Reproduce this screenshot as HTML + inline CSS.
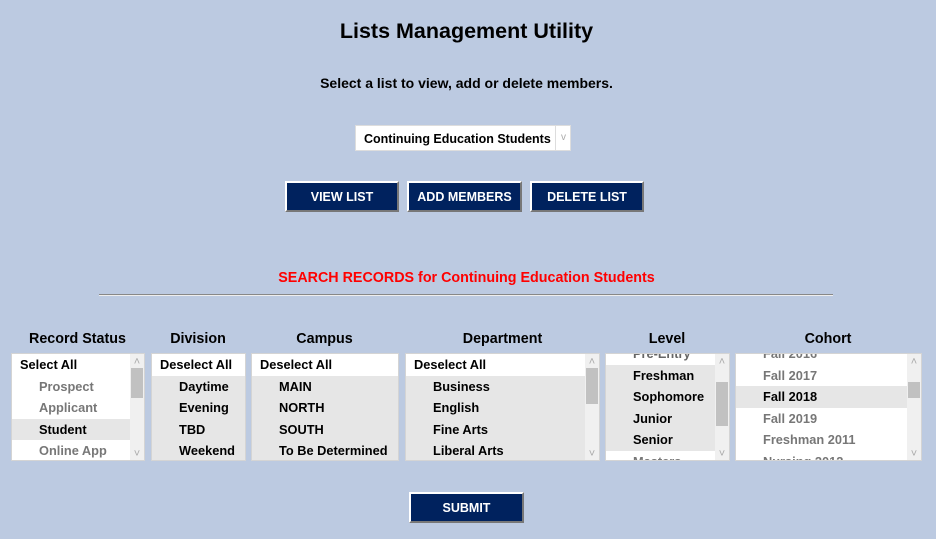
<!DOCTYPE html>
<html><head><style>
body{margin:0;width:936px;height:539px;background:#bccae1;font-family:"Liberation Sans",Arial,sans-serif;font-weight:bold;position:relative;overflow:hidden}
.a{position:absolute}
h1{position:absolute;top:19px;left:0;width:933px;text-align:center;font-size:21.5px;margin:0}
.sub{top:75px;left:0;width:933px;text-align:center;font-size:14px}
.sel{left:355px;top:125px;width:216px;height:26px;background:#fff;border:1px solid #ddd;box-sizing:border-box;font-size:12.5px}
.btn{background:#00225e;color:#fff;font-size:12.5px;text-align:center;line-height:29px;height:31px;box-sizing:border-box;border:2px solid;border-color:#fff #777 #777 #fff}
.hd{font-size:14.3px;text-align:center;top:331px}
.box{top:353px;height:108px;background:#fff;overflow:hidden;font-size:12.8px;border:1px solid #d4d4d4;box-sizing:border-box}
.row{height:21.5px;line-height:21.5px;white-space:nowrap}
.g{background:#e6e6e6}
.i{padding-left:27px}
.f{padding-left:8px}
.gr{color:#777}
.sb{position:absolute;right:0;top:0;width:14px;height:100%;background:#f0f0f0}
.th{position:absolute;left:1px;width:12px;background:#c1c1c1}
.ar{position:absolute;left:2px;width:10px;font-size:11px;color:#aaa;font-weight:normal;text-align:center;line-height:10px}
</style></head><body>
<h1>Lists Management Utility</h1>
<div class="a sub">Select a list to view, add or delete members.</div>
<div class="a sel"><span class="a" style="left:8px;top:6px">Continuing Education Students</span><span class="a" style="left:199px;top:0;width:15px;height:24px;border-left:1px solid #ddd;color:#aaa;font-size:10px;text-align:center;line-height:24px;font-weight:normal">v</span></div>
<div class="a btn" style="left:285px;top:181px;width:114px">VIEW LIST</div>
<div class="a btn" style="left:407px;top:181px;width:115px">ADD MEMBERS</div>
<div class="a btn" style="left:530px;top:181px;width:114px">DELETE LIST</div>
<div class="a" style="left:0;width:933px;top:270px;text-align:center;color:#f00;font-size:14.3px">SEARCH RECORDS for Continuing Education Students</div>
<div class="a" style="left:99px;top:294px;width:734px;height:1px;background:#888;border-bottom:1px solid #eee"></div>

<div class="a hd" style="left:11px;width:133px">Record Status</div>
<div class="a hd" style="left:151px;width:94px">Division</div>
<div class="a hd" style="left:251px;width:147px">Campus</div>
<div class="a hd" style="left:405px;width:195px">Department</div>
<div class="a hd" style="left:605px;width:124px">Level</div>
<div class="a hd" style="left:735px;width:186px">Cohort</div>

<div class="a box" style="left:11px;width:134px"><div style="margin-right:14px">
<div class="row f">Select All</div><div class="row i gr">Prospect</div><div class="row i gr">Applicant</div><div class="row i g">Student</div><div class="row i gr">Online App</div></div>
<div class="sb"><span class="ar" style="top:3px">&#708;</span><div class="th" style="top:14px;height:30px"></div><span class="ar" style="bottom:1px">&#709;</span></div></div>

<div class="a box" style="left:151px;width:95px"><div class="row f">Deselect All</div><div class="row i g">Daytime</div><div class="row i g">Evening</div><div class="row i g">TBD</div><div class="row i g">Weekend</div></div>

<div class="a box" style="left:251px;width:148px"><div class="row f">Deselect All</div><div class="row i g">MAIN</div><div class="row i g">NORTH</div><div class="row i g">SOUTH</div><div class="row i g">To Be Determined</div></div>

<div class="a box" style="left:405px;width:195px"><div style="margin-right:14px"><div class="row f">Deselect All</div><div class="row i g">Business</div><div class="row i g">English</div><div class="row i g">Fine Arts</div><div class="row i g">Liberal Arts</div></div>
<div class="sb"><span class="ar" style="top:3px">&#708;</span><div class="th" style="top:14px;height:36px"></div><span class="ar" style="bottom:1px">&#709;</span></div></div>

<div class="a box" style="left:605px;width:125px"><div style="margin-right:14px;margin-top:-11px"><div class="row i gr" style="color:#666">Pre-Entry</div><div class="row i g">Freshman</div><div class="row i g">Sophomore</div><div class="row i g">Junior</div><div class="row i g">Senior</div><div class="row i gr">Masters</div></div>
<div class="sb"><span class="ar" style="top:3px">&#708;</span><div class="th" style="top:28px;height:44px"></div><span class="ar" style="bottom:1px">&#709;</span></div></div>

<div class="a box" style="left:735px;width:187px"><div style="margin-right:14px;margin-top:-11px"><div class="row i gr">Fall 2016</div><div class="row i gr">Fall 2017</div><div class="row i g" style="color:#000">Fall 2018</div><div class="row i gr">Fall 2019</div><div class="row i gr">Freshman 2011</div><div class="row i gr">Nursing 2012</div></div>
<div class="sb"><span class="ar" style="top:3px">&#708;</span><div class="th" style="top:28px;height:16px"></div><span class="ar" style="bottom:1px">&#709;</span></div></div>

<div class="a btn" style="left:409px;top:492px;width:115px">SUBMIT</div>
</body></html>
